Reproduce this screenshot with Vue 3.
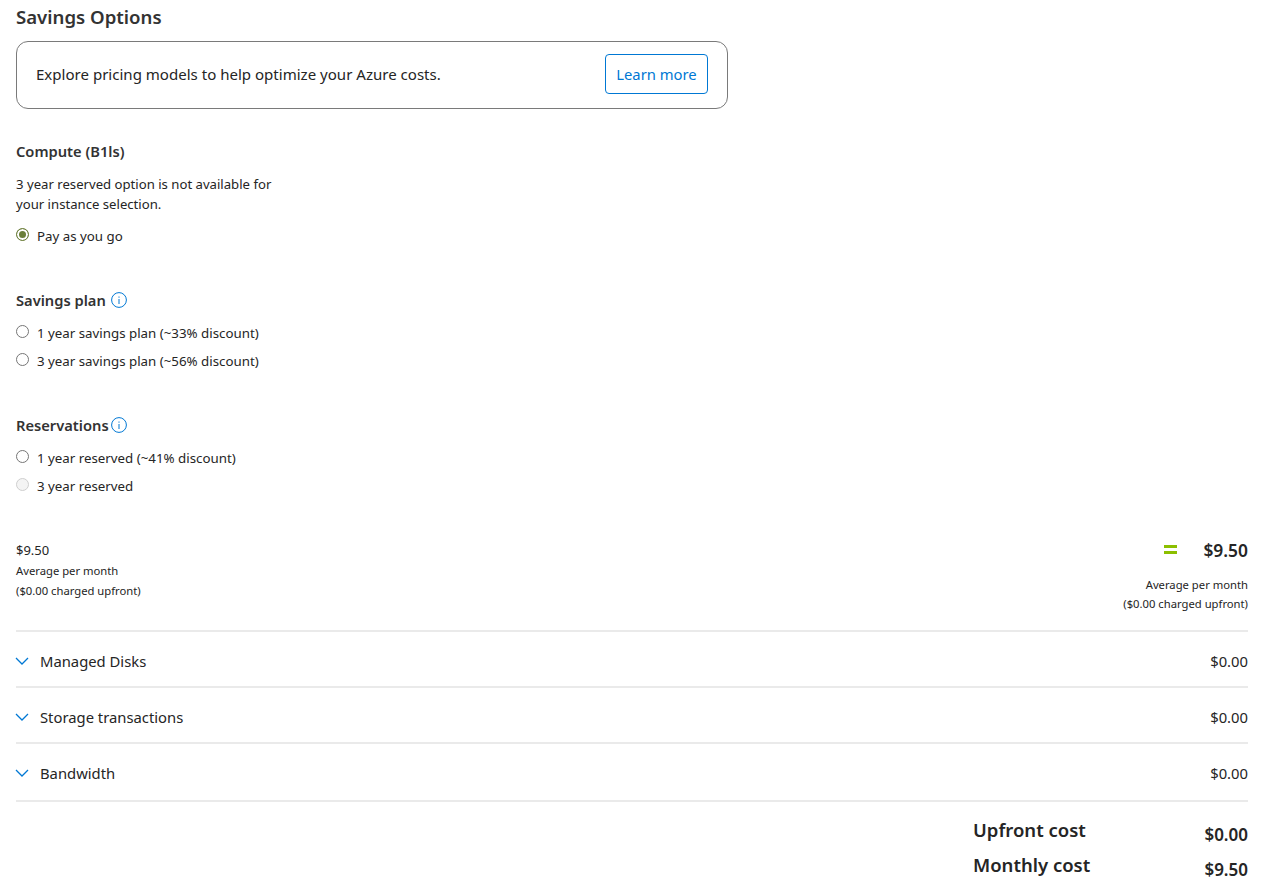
<script setup>
const savingsPlans = ['1 year savings plan (~33% discount)', '3 year savings plan (~56% discount)']

const rows = [
  { name: 'Managed Disks', price: '$0.00' },
  { name: 'Storage transactions', price: '$0.00' },
  { name: 'Bandwidth', price: '$0.00' },
]
</script>

<template>
  <div class="page">
    <h2 class="title">Savings Options</h2>

    <div class="banner">
      <span class="banner-text">Explore pricing models to help optimize your Azure costs.</span>
      <button class="learn-btn">Learn more</button>
    </div>

    <section class="compute">
      <h3 class="group-title">Compute (B1ls)</h3>
      <p class="note">3 year reserved option is not available for<br />your instance selection.</p>
      <label class="radio-row">
        <span class="radio checked"></span>
        <span>Pay as you go</span>
      </label>
    </section>

    <section class="savings">
      <h3 class="group-title">
        Savings plan
        <svg class="info" viewBox="0 0 16 16" width="16" height="16">
          <circle cx="8" cy="8" r="7.4" fill="none" stroke="#0078d4" stroke-width="1" />
          <rect x="7.5" y="7" width="1" height="5" fill="#0078d4" />
          <rect x="7.5" y="4.5" width="1" height="1.2" fill="#0078d4" />
        </svg>
      </h3>
      <label v-for="p in savingsPlans" :key="p" class="radio-row">
        <span class="radio"></span>
        <span>{{ p }}</span>
      </label>
    </section>

    <section class="reservations">
      <h3 class="group-title">
        Reservations
        <svg class="info" viewBox="0 0 16 16" width="16" height="16">
          <circle cx="8" cy="8" r="7.4" fill="none" stroke="#0078d4" stroke-width="1" />
          <rect x="7.5" y="7" width="1" height="5" fill="#0078d4" />
          <rect x="7.5" y="4.5" width="1" height="1.2" fill="#0078d4" />
        </svg>
      </h3>
      <label class="radio-row">
        <span class="radio"></span>
        <span>1 year reserved (~41% discount)</span>
      </label>
      <label class="radio-row">
        <span class="radio disabled"></span>
        <span>3 year reserved</span>
      </label>
    </section>

    <div class="summary">
      <div class="summary-left">
        <div class="left-price">$9.50</div>
        <div class="small first">Average per month</div>
        <div class="small">($0.00 charged upfront)</div>
      </div>
      <div class="summary-right">
        <div class="total">
          <span class="equals"></span>
          <span class="total-price">$9.50</span>
        </div>
        <div class="small avg">Average per month</div>
        <div class="small">($0.00 charged upfront)</div>
      </div>
    </div>

    <div class="rows">
      <div v-for="r in rows" :key="r.name" class="row">
        <div class="row-name">
          <svg class="chevron" viewBox="0 0 14 8" width="14" height="8">
            <path d="M1 1l6 6 6-6" fill="none" stroke="#0078d4" stroke-width="1.3" />
          </svg>
          <span>{{ r.name }}</span>
        </div>
        <span>{{ r.price }}</span>
      </div>
    </div>

    <div class="costs">
      <div class="cost-line">
        <span class="cost-label">Upfront cost</span>
        <span class="cost-value">$0.00</span>
      </div>
      <div class="cost-line">
        <span class="cost-label">Monthly cost</span>
        <span class="cost-value">$9.50</span>
      </div>
    </div>
  </div>
</template>

<style>
body {
  background: #fff;
}
</style>

<style scoped>
.page {
  box-sizing: border-box;
  width: 1265px;
  height: 892px;
  overflow: hidden;
  padding: 4px 17px 0 16px;
  font-family: "Noto Sans", "Open Sans", sans-serif;
  font-size: 13px;
  color: #252525;
}

.title {
  margin: 0;
  font-size: 18.6px;
  line-height: 25px;
  font-weight: 600;
  color: #333;
}

.banner {
  box-sizing: border-box;
  width: 712px;
  height: 68px;
  margin-top: 12px;
  padding: 0 19px 2px;
  display: flex;
  align-items: center;
  justify-content: space-between;
  border: 1px solid #7a7a7a;
  border-radius: 12px;
  font-size: 15.05px;
}

.learn-btn {
  box-sizing: border-box;
  width: 103px;
  height: 40px;
  padding: 0;
  background: #fff;
  border: 1px solid #0078d4;
  border-radius: 4px;
  color: #0078d4;
  font-family: inherit;
  font-size: 14.8px;
}

.group-title {
  display: flex;
  align-items: center;
  gap: 5px;
  margin: 0;
  font-size: 14.7px;
  line-height: 20px;
  font-weight: 600;
  color: #333;
}

.compute {
  margin-top: 32px;
}

.note {
  margin: 13px 0 0;
  line-height: 20px;
  font-size: 13.15px;
}

.savings {
  margin-top: 40px;
}

.reservations {
  margin-top: 40px;
}

.reservations .group-title {
  gap: 2px;
}

.radio-row {
  display: flex;
  align-items: center;
  gap: 8px;
  height: 28px;
  font-size: 13.3px;
}

.compute .radio-row {
  margin-top: 8px;
}

.savings .group-title + .radio-row,
.reservations .group-title + .radio-row {
  margin-top: 9px;
}

.radio {
  box-sizing: border-box;
  width: 13px;
  height: 13px;
  border: 1px solid #767676;
  border-radius: 50%;
  background: #fff;
  flex: none;
  margin-top: -3px;
}

.radio.checked {
  border-color: #6d7f3c;
  background: #6b7f3a;
  box-shadow: inset 0 0 0 2px #fff;
}

.radio.disabled {
  border-color: #cfcfcf;
  background: #f4f4f4;
}

.summary {
  display: flex;
  justify-content: space-between;
  margin-top: 37px;
  height: 93px;
  border-bottom: 2px solid #eaeaea;
}

.left-price {
  font-size: 13px;
  line-height: 20px;
  margin-top: 3px;
}

.small {
  font-size: 11.25px;
  line-height: 20px;
}

.small.first {
  margin-top: 1px;
}

.summary-right {
  text-align: right;
}

.summary-right .small {
  line-height: 19px;
}

.total {
  display: flex;
  align-items: center;
  justify-content: flex-end;
  gap: 26px;
  height: 26px;
}

.equals {
  display: block;
  width: 13px;
  height: 9px;
  border-top: 3px solid #8cbf00;
  border-bottom: 3px solid #8cbf00;
  box-sizing: border-box;
  margin-top: -1px;
}

.total-price {
  font-size: 17.4px;
  font-weight: 600;
}

.summary-right .small.avg {
  margin-top: 12px;
}

.row {
  box-sizing: border-box;
  display: flex;
  align-items: center;
  justify-content: space-between;
  height: 56px;
  padding-top: 4px;
  border-bottom: 2px solid #eaeaea;
  font-size: 14.8px;
}

.row:last-child {
  height: 58px;
  padding-top: 2px;
}

.row-name {
  display: flex;
  align-items: center;
  gap: 11px;
}

.chevron {
  margin-left: -1px;
}

.costs {
  margin-top: 10px;
}

.cost-line {
  height: 35px;
  margin-left: 957px;
  display: flex;
  justify-content: space-between;
}

.cost-label {
  font-size: 18.5px;
  font-weight: 600;
  line-height: 36px;
}

.cost-value {
  font-size: 17px;
  font-weight: 600;
  line-height: 46px;
}
</style>
